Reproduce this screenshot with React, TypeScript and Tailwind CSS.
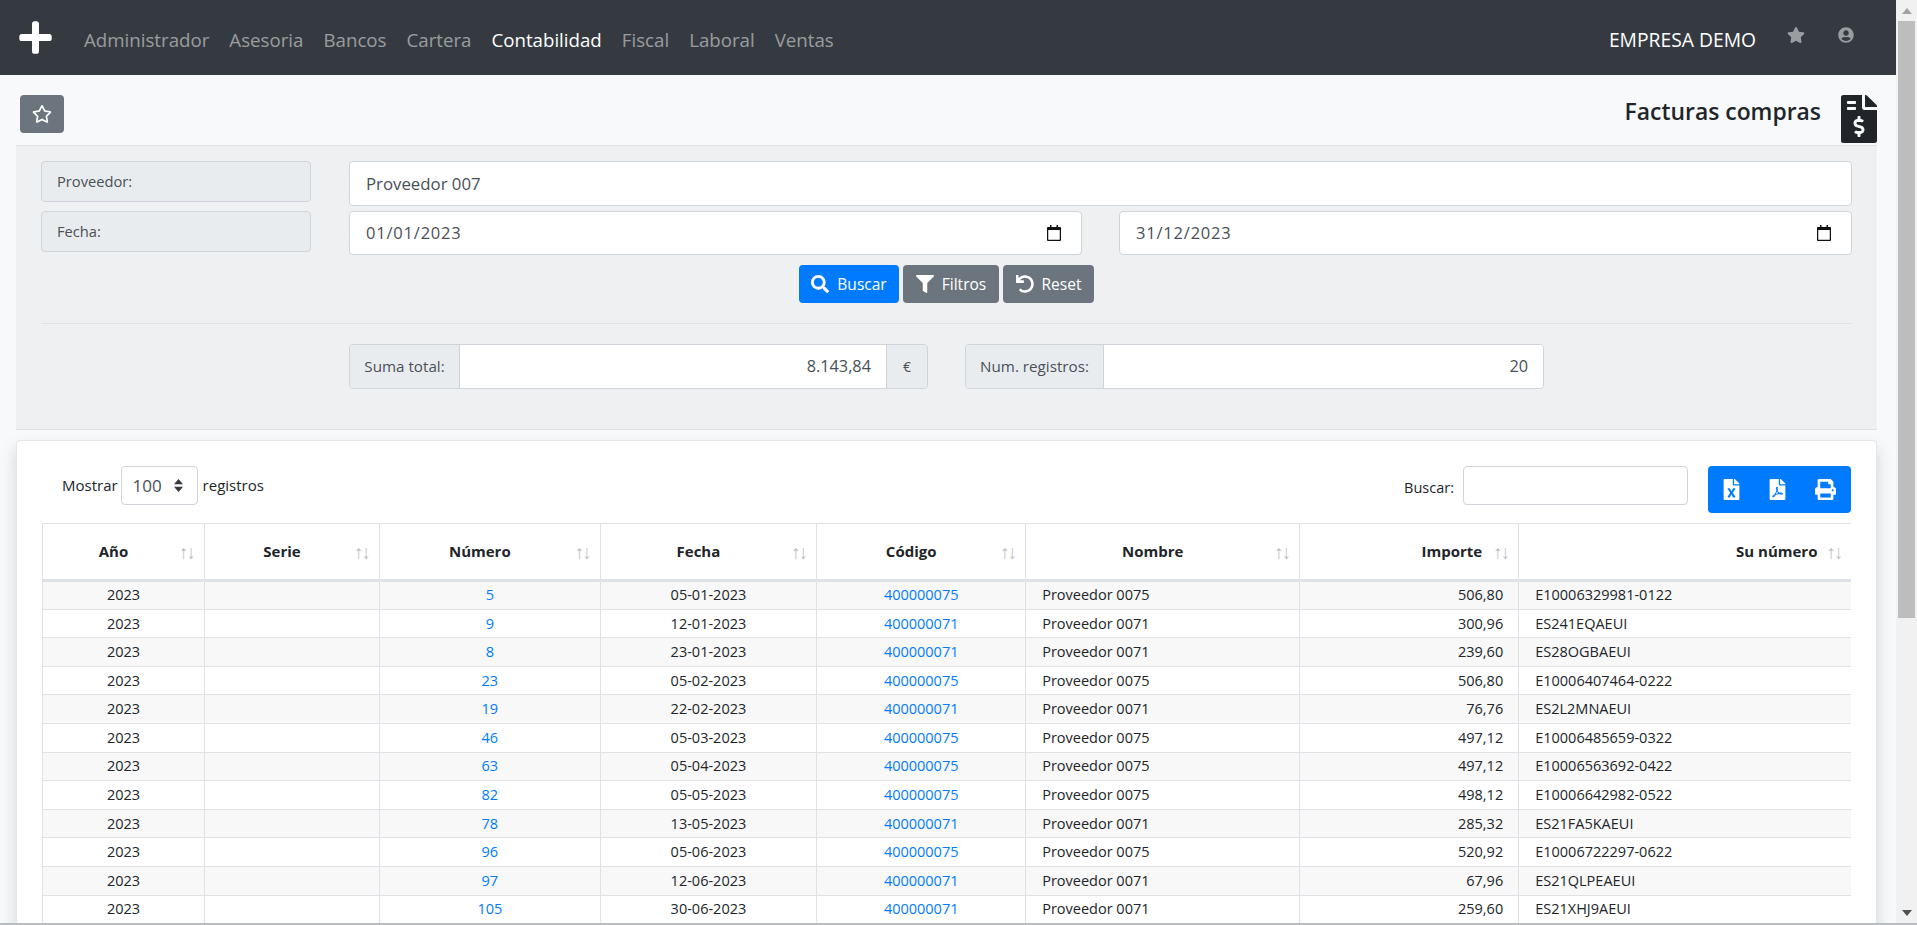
import * as React from "react";
import {
  FaFileExcel,
  FaFileInvoiceDollar,
  FaFilePdf,
  FaFilter,
  FaPlus,
  FaPrint,
  FaRegStar,
  FaSearch,
  FaStar,
  FaUndo,
  FaUserCircle,
} from "react-icons/fa";

const navItems = ["Administrador", "Asesoria", "Bancos", "Cartera", "Contabilidad", "Fiscal", "Laboral", "Ventas"];

const columns = [
  { label: "Año", width: "w-[162px]", cell: "text-center pr-[36px]" },
  { label: "Serie", width: "w-[175px]", cell: "text-center pr-[36px]" },
  { label: "Número", width: "w-[220.7px]", cell: "text-center pr-[36px]" },
  { label: "Fecha", width: "w-[216.5px]", cell: "text-center pr-[36px]" },
  { label: "Código", width: "w-[209px]", cell: "text-center pr-[36px]" },
  { label: "Nombre", width: "w-[274px]", cell: "text-center pr-[36px]" },
  { label: "Importe", width: "w-[219px]", cell: "text-right pr-[36px]" },
  { label: "Su número", width: "w-[332.8px]", cell: "text-right pr-[34px]" },
];

const rows = [
  ["5", "05-01-2023", "400000075", "Proveedor 0075", "506,80", "E10006329981-0122"],
  ["9", "12-01-2023", "400000071", "Proveedor 0071", "300,96", "ES241EQAEUI"],
  ["8", "23-01-2023", "400000071", "Proveedor 0071", "239,60", "ES28OGBAEUI"],
  ["23", "05-02-2023", "400000075", "Proveedor 0075", "506,80", "E10006407464-0222"],
  ["19", "22-02-2023", "400000071", "Proveedor 0071", "76,76", "ES2L2MNAEUI"],
  ["46", "05-03-2023", "400000075", "Proveedor 0075", "497,12", "E10006485659-0322"],
  ["63", "05-04-2023", "400000075", "Proveedor 0075", "497,12", "E10006563692-0422"],
  ["82", "05-05-2023", "400000075", "Proveedor 0075", "498,12", "E10006642982-0522"],
  ["78", "13-05-2023", "400000071", "Proveedor 0071", "285,32", "ES21FA5KAEUI"],
  ["96", "05-06-2023", "400000075", "Proveedor 0075", "520,92", "E10006722297-0622"],
  ["97", "12-06-2023", "400000071", "Proveedor 0071", "67,96", "ES21QLPEAEUI"],
  ["105", "30-06-2023", "400000071", "Proveedor 0071", "259,60", "ES21XHJ9AEUI"],
];

function CalendarIcon() {
  return (
    <svg width="14" height="16" viewBox="0 0 14 16" className="shrink-0">
      <path d="M3 0h1.5v2h5V0H11v2h2a1 1 0 0 1 1 1v12a1 1 0 0 1-1 1H1a1 1 0 0 1-1-1V3a1 1 0 0 1 1-1h2z" fill="#111" />
      <rect x="1.25" y="5" width="11.5" height="9.75" fill="#fff" />
    </svg>
  );
}

function InputLabel({ text }: { text: string }) {
  return (
    <div className="w-[270px] h-[41px] shrink-0 pl-[15px] flex items-center bg-[#e9ecef] border border-[#ced4da] rounded text-[14.7px] text-[#495057]">
      {text}
    </div>
  );
}

function DateField({ value }: { value: string }) {
  return (
    <div className="flex-1 h-[44px] bg-white border border-[#ced4da] rounded pl-4 pr-[20px] flex items-center justify-between text-[16.5px] tracking-[0.8px] text-[#495057]">
      <span>{value}</span>
      <CalendarIcon />
    </div>
  );
}

function ActionButton({ color, width, icon, text }: { color: string; width: string; icon: React.ReactNode; text: string }) {
  return (
    <button className={`${color} ${width} h-[38px] rounded flex items-center justify-center gap-[8px] text-white text-[15.5px]`}>
      {icon}
      <span className="pt-[2px]">{text}</span>
    </button>
  );
}

function SummaryGroup({ label, labelWidth, value, suffix }: { label: string; labelWidth: string; value: string; suffix?: string }) {
  return (
    <div className="w-[579px] h-[45px] flex border border-[#ced4da] rounded overflow-hidden text-[#495057]">
      <div className={`${labelWidth} shrink-0 bg-[#e9ecef] border-r border-[#ced4da] flex items-center justify-center text-[15.2px]`}>{label}</div>
      <div className="flex-1 bg-white flex items-center justify-end pr-[15px] text-[16.3px]">{value}</div>
      {suffix && <div className="w-[41px] shrink-0 bg-[#e9ecef] border-l border-[#ced4da] flex items-center justify-center text-[14px]">{suffix}</div>}
    </div>
  );
}

function SortArrows() {
  return (
    <span className="absolute right-[8px] top-1/2 -translate-y-1/2 flex text-[19px] font-normal leading-none text-[#212529]">
      <span className="opacity-30 -mr-[2px]">↑</span>
      <span className="opacity-30">↓</span>
    </span>
  );
}

export default function App() {
  return (
    <div className="flex h-[925px] w-full overflow-hidden border-b-2 border-[#b9bcc2] bg-[#f8f9fa] font-['Open_Sans',sans-serif] text-[#212529]">
      <main className="flex-1 min-w-0">
        {/* Navbar */}
        <nav className="h-[75px] bg-[#343a40] flex items-center pl-[17px] pr-[42px]">
          <FaPlus className="text-white text-[37px] shrink-0" />
          <ul className="flex ml-[30px] gap-[20px] text-[18.7px] pt-[5px]">
            {navItems.map((item) => (
              <li key={item} className={item === "Contabilidad" ? "text-white" : "text-white/50"}>
                {item}
              </li>
            ))}
          </ul>
          <span className="ml-auto pt-[5px] text-white text-[19.3px]">EMPRESA DEMO</span>
          <FaStar className="ml-[31px] mb-[6px] text-white/50 text-[18px]" />
          <FaUserCircle className="ml-[33px] mb-[6px] text-white/50 text-[16px]" />
        </nav>

        {/* Title row */}
        <div className="h-[70px] pl-5 pr-[19px] pt-5 flex items-start justify-between">
          <button className="w-[44px] h-[38px] bg-[#6c757d] rounded flex items-center justify-center text-white">
            <FaRegStar className="text-[20px]" />
          </button>
          <div className="flex items-start gap-[20px]">
            <h1 className="text-[22.9px] font-semibold leading-[34px] text-[#212529]">Facturas compras</h1>
            <FaFileInvoiceDollar className="w-[36px] h-[48px] text-[#212529]" />
          </div>
        </div>

        {/* Filters panel */}
        <section className="ml-4 mr-[19px] bg-[#eff0f2] border-y border-[#dee2e6] px-[25px] pt-[15px] pb-[40px]">
          <div className="flex gap-[38px]">
            <InputLabel text="Proveedor:" />
            <input
              readOnly
              value="Proveedor 007"
              className="flex-1 h-[45px] bg-white border border-[#ced4da] rounded px-4 text-[16.8px] text-[#495057] outline-none"
            />
          </div>
          <div className="flex gap-[38px] mt-[5px]">
            <InputLabel text="Fecha:" />
            <div className="flex-1 flex gap-[37px]">
              <DateField value="01/01/2023" />
              <DateField value="31/12/2023" />
            </div>
          </div>
          <div className="flex justify-center gap-1 mt-[10px]">
            <ActionButton color="bg-[#007bff]" width="w-[100px]" icon={<FaSearch className="text-[18px]" />} text="Buscar" />
            <ActionButton color="bg-[#6c757d]" width="w-[96px]" icon={<FaFilter className="text-[18px]" />} text="Filtros" />
            <ActionButton color="bg-[#6c757d]" width="w-[91px]" icon={<FaUndo className="text-[18px]" />} text="Reset" />
          </div>
          <hr className="mt-5 border-t border-[#dee2e6]" />
          <div className="flex mt-5 pl-[308px] gap-[37px]">
            <SummaryGroup label="Suma total:" labelWidth="w-[110px]" value="8.143,84" suffix="€" />
            <SummaryGroup label="Num. registros:" labelWidth="w-[138px]" value="20" />
          </div>
        </section>

        {/* Table card */}
        <section className="ml-4 mr-[19px] mt-[10px] bg-white border border-[#e3e5e7] rounded shadow-[0_8px_16px_rgba(0,0,0,0.15)] px-[25px] pt-[25px] h-[600px]">
          <div className="flex items-start h-[57px]">
            <div className="flex items-center h-[39px] pl-5 text-[15px]">
              <span>Mostrar</span>
              <div className="w-[77px] h-[39px] ml-[3px] mr-[5px] border border-[#ced4da] rounded flex items-center justify-between pl-[11px] pr-[14px] text-[17px] text-[#495057]">
                100
                <svg width="9" height="13" viewBox="0 0 9 13">
                  <path d="M4.5 0 9 5.2H0zM4.5 13 0 7.8h9z" fill="#343a40" />
                </svg>
              </div>
              <span>registros</span>
            </div>
            <div className="ml-auto flex items-start text-[14.5px]">
              <span className="h-[39px] flex items-center pt-[4px] mr-[9px]">Buscar:</span>
              <div className="w-[225px] h-[39px] bg-white border border-[#ced4da] rounded" />
              <div className="w-[143px] h-[47px] ml-[20px] bg-[#007bff] rounded flex items-center pl-[13px] text-white text-[21px]">
                <FaFileExcel />
                <FaFilePdf className="ml-[24.5px]" />
                <FaPrint className="ml-[27.5px]" />
              </div>
            </div>
          </div>

          <table className="table-fixed border-collapse w-[1809px] text-[14.5px]">
            <colgroup>
              {columns.map((c) => (
                <col key={c.label} className={c.width} />
              ))}
            </colgroup>
            <thead>
              <tr className="h-[57px]">
                {columns.map((c) => (
                  <th
                    key={c.label}
                    className={`relative border border-[#dee2e6] border-b-[3px] last:border-r-0 pl-4 text-[15px] font-bold align-middle ${c.cell}`}
                  >
                    {c.label}
                    <SortArrows />
                  </th>
                ))}
              </tr>
            </thead>
            <tbody>
              {rows.map((r, i) => (
                <tr key={i} className={`h-[28.6px] ${i % 2 === 0 ? "bg-[#f8f8f8]" : "bg-white"}`}>
                  <td className="border border-[#dee2e6] px-4 py-0 text-center">2023</td>
                  <td className="border border-[#dee2e6] px-4 py-0"></td>
                  <td className="border border-[#dee2e6] px-4 py-0 text-center text-[#007bff]">{r[0]}</td>
                  <td className="border border-[#dee2e6] px-4 py-0 text-center">{r[1]}</td>
                  <td className="border border-[#dee2e6] px-4 py-0 text-center text-[#007bff]">{r[2]}</td>
                  <td className="border border-[#dee2e6] px-4 py-0">{r[3]}</td>
                  <td className="border border-[#dee2e6] pl-4 pr-[15px] py-0 text-right">{r[4]}</td>
                  <td className="border border-[#dee2e6] border-r-0 px-4 py-0">{r[5]}</td>
                </tr>
              ))}
            </tbody>
          </table>
        </section>
      </main>

      {/* Scrollbar */}
      <div className="w-[21px] shrink-0 bg-[#f1f1f1] flex flex-col items-center">
        <div className="h-[21px] flex items-center justify-center">
          <div className="w-0 h-0 border-x-[5px] border-x-transparent border-b-[6px] border-b-[#a3a3a3]" />
        </div>
        <div className="w-[17px] h-[597px] bg-[#bdbdbd]" />
        <div className="mt-auto h-[21px] flex items-center justify-center">
          <div className="w-0 h-0 border-x-[5px] border-x-transparent border-t-[6px] border-t-[#505050]" />
        </div>
      </div>
    </div>
  );
}
